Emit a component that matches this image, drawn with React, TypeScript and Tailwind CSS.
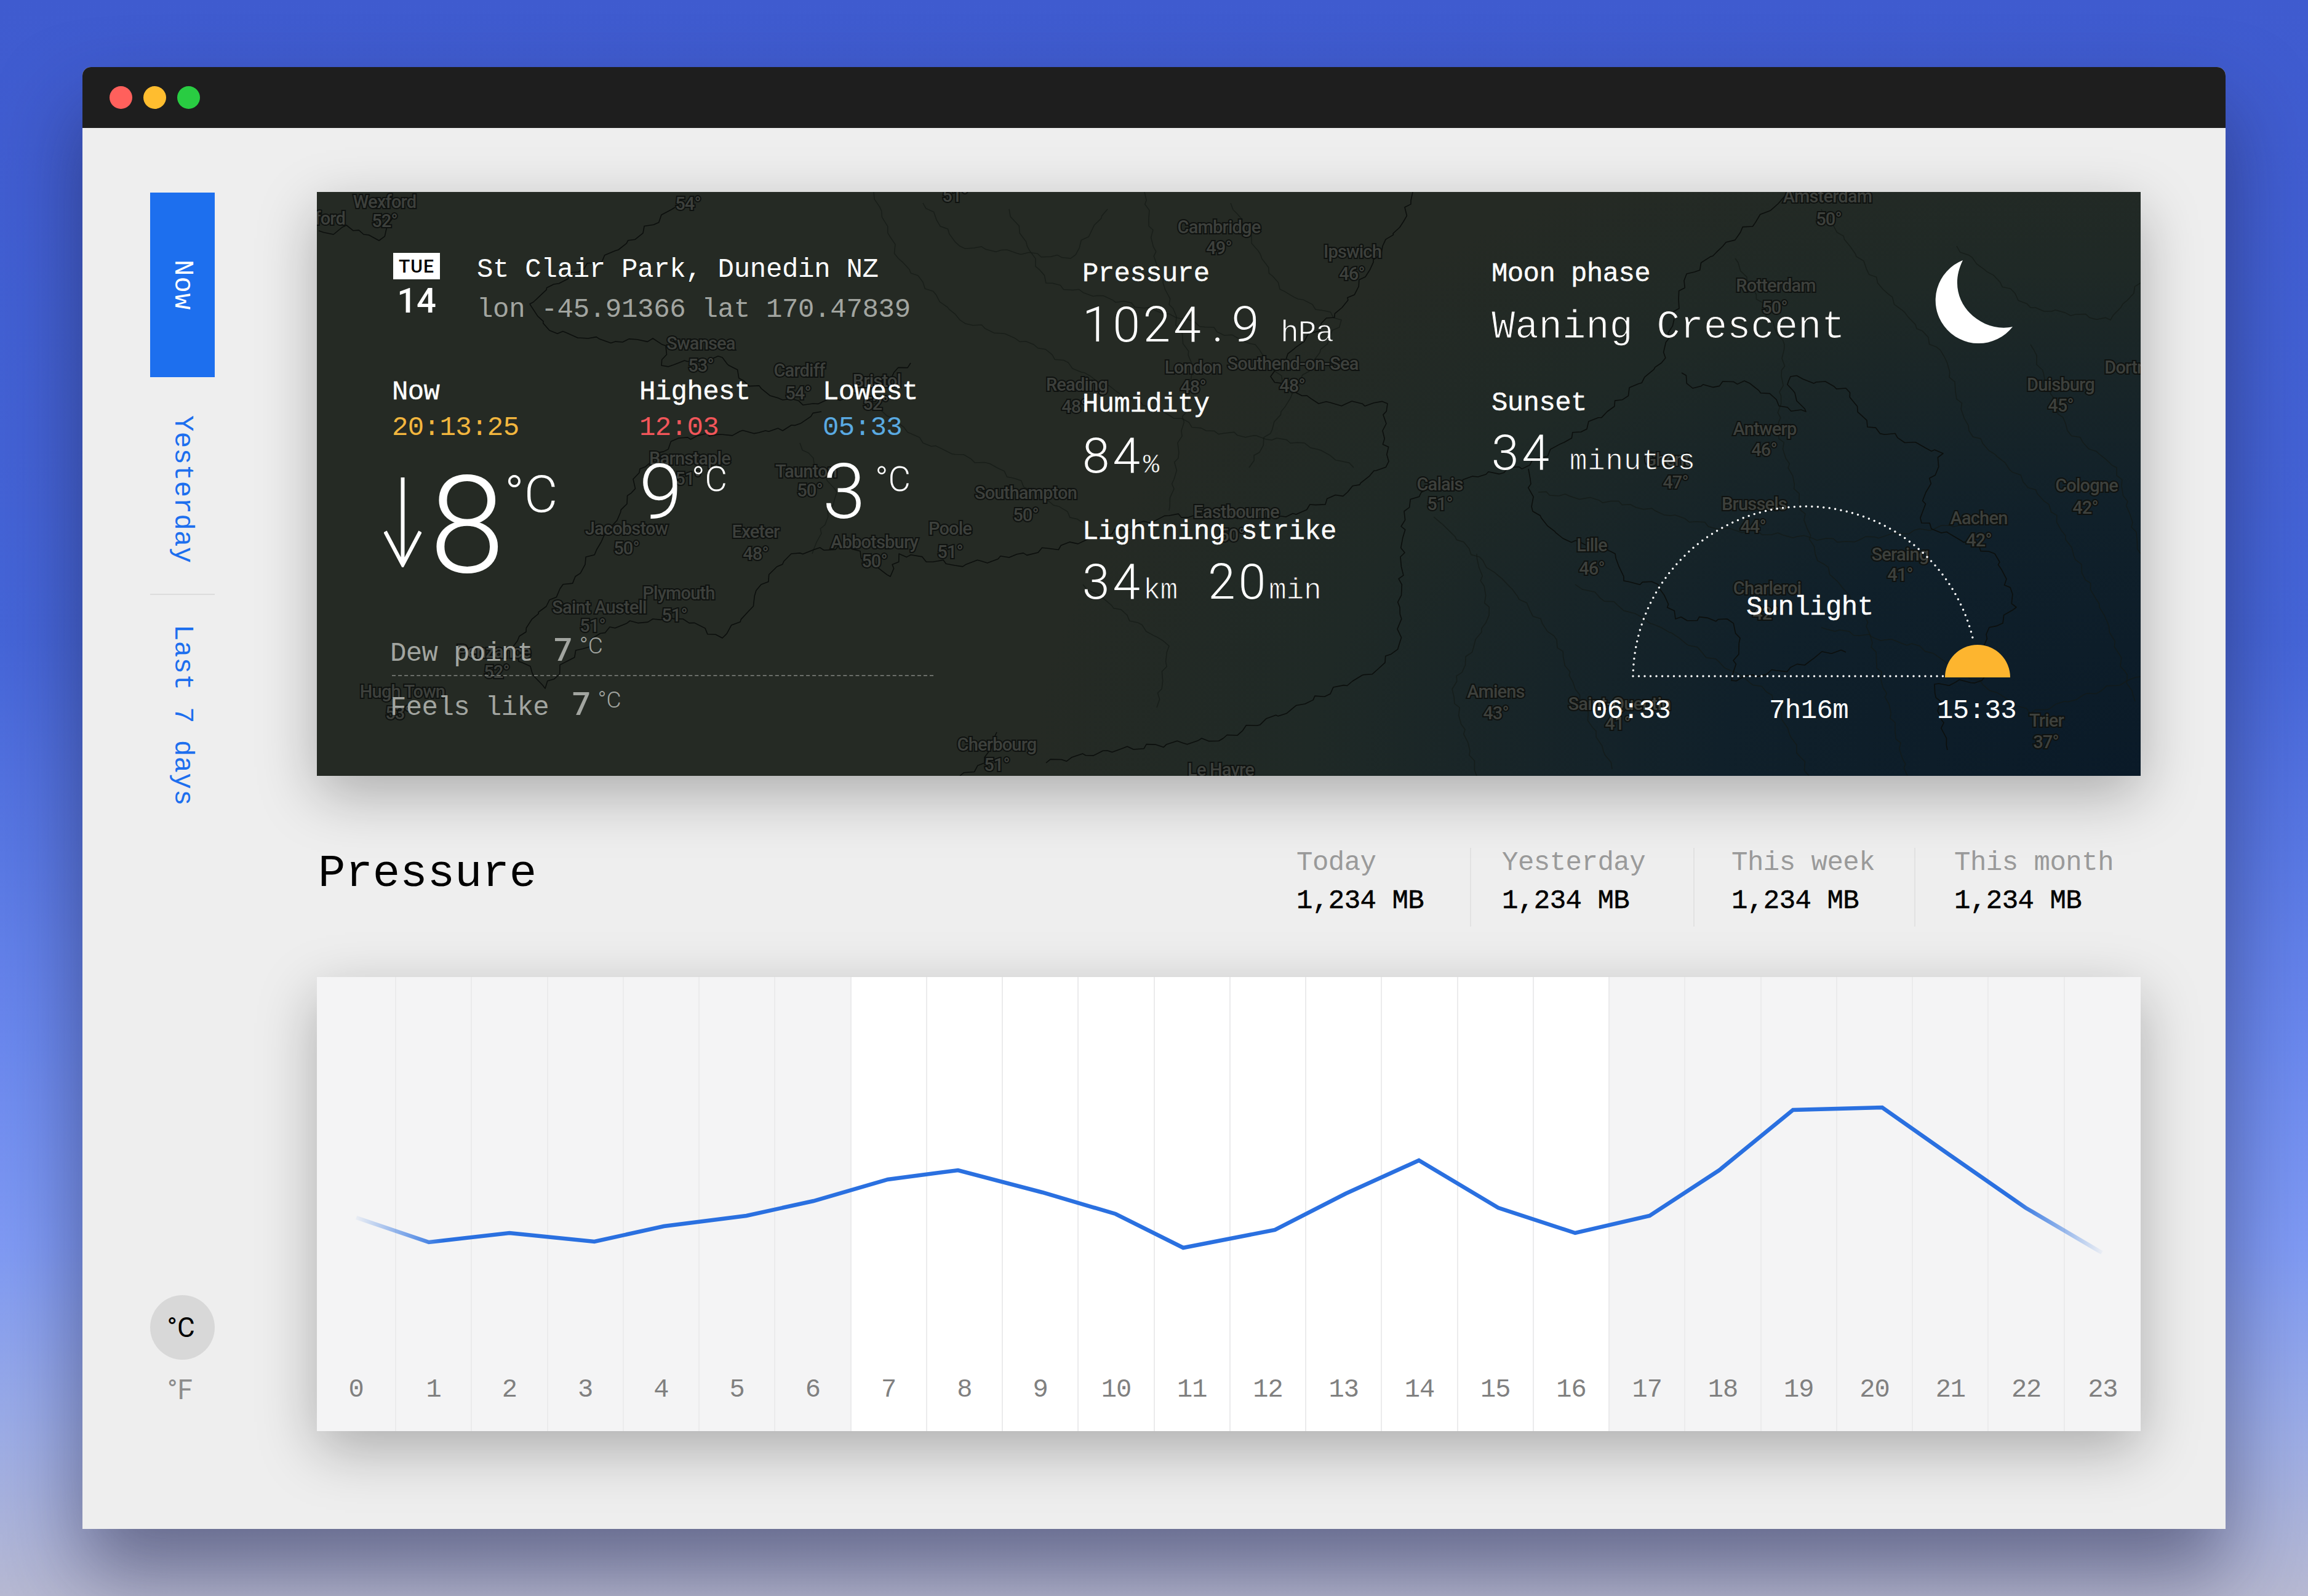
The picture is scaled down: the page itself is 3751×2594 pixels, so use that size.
const hours = Array.from({ length: 24 }, (_, i) => i);

const stats = [
  { label: "Today", cls: "w-[282px] pl-0" },
  { label: "Yesterday", cls: "w-[363px] pl-[50px] border-l-2 border-[#e2e2e2]" },
  { label: "This week", cls: "w-[359px] pl-[60px] border-l-2 border-[#e2e2e2]" },
  { label: "This month", cls: "w-[368px] pl-[63px] border-l-2 border-[#e2e2e2]" },
];

// label positions in page pixels, the map svg has a matching viewBox
const mapLabels: [string, number, number][] = [
  ["Wexford", 625, 328], ["52°", 625, 359], ["54°", 1118, 331], ["51°", 1552, 318],
  ["Swansea", 1139, 558], ["53°", 1139, 594], ["Cardiff", 1299, 602], ["54°", 1297, 639],
  ["Bristol", 1425, 619], ["52°", 1423, 656], ["Barnstaple", 1121, 745], ["51°", 1118, 778],
  ["Taunton", 1310, 766], ["50°", 1316, 797], ["Jacobstow", 1018, 859], ["50°", 1018, 891],
  ["Exeter", 1228, 864], ["48°", 1228, 900], ["Abbotsbury", 1421, 881], ["50°", 1421, 912],
  ["Poole", 1544, 859], ["51°", 1544, 897], ["Saint Austell", 974, 987], ["51°", 963, 1017],
  ["Plymouth", 1103, 964], ["51°", 1096, 1000], ["Penzance", 802, 1059], ["52°", 807, 1092],
  ["Hugh Town", 654, 1124], ["53°", 647, 1159], ["Cherbourg", 1620, 1210], ["51°", 1620, 1243],
  ["Cambridge", 1981, 369], ["49°", 1981, 403], ["Ipswich", 2198, 409], ["46°", 2197, 445],
  ["London", 1939, 597], ["48°", 1939, 629], ["Southend-on-Sea", 2101, 591], ["48°", 2100, 627],
  ["Reading", 1750, 625], ["48°", 1746, 661], ["Southampton", 1667, 801], ["50°", 1667, 837],
  ["Eastbourne", 2009, 832], ["50°", 2002, 870], ["Calais", 2340, 787], ["51°", 2340, 819],
  ["Le Havre", 1984, 1251], ["Amiens", 2431, 1124], ["43°", 2431, 1159], ["Amsterdam", 2970, 319],
  ["50°", 2972, 356], ["Rotterdam", 2886, 464], ["50°", 2884, 500], ["Antwerp", 2868, 697],
  ["46°", 2867, 731], ["Ghent", 2709, 747], ["47°", 2723, 784], ["Brussels", 2851, 819],
  ["44°", 2849, 856], ["Lille", 2587, 886], ["46°", 2587, 924], ["Charleroi", 2872, 956],
  ["42°", 2869, 997], ["Seraing", 3088, 901], ["41°", 3088, 934], ["Aachen", 3216, 842],
  ["42°", 3216, 878], ["Duisburg", 3349, 625], ["45°", 3349, 659], ["Cologne", 3391, 789],
  ["42°", 3389, 825], ["Dortmund", 3482, 597], ["Saint-Quentin", 2632, 1144], ["41°", 2629, 1176],
  ["Trier", 3326, 1171], ["37°", 3325, 1206], ["Waterford", 500, 355],
];

const coast: [number, number][][] = [
  [[518, 375], [542, 381], [563, 366], [591, 381], [616, 391], [628, 372], [640, 352]],
  [[1097, 337], [1005, 406], [949, 437], [900, 462], [861, 494], [893, 537], [956, 550], [1012, 556], [1061, 550], [1082, 562], [1075, 594], [1131, 587], [1174, 581], [1209, 619], [1272, 650], [1321, 656], [1400, 640], [1480, 590]],
  [[1335, 669], [1272, 700], [1244, 700], [1167, 706], [1103, 712], [1040, 762], [1019, 819], [977, 881], [935, 937], [893, 975], [844, 1034], [830, 1056], [865, 1094], [886, 1119], [921, 1075], [991, 1019], [1061, 1006], [1110, 1006], [1174, 1037], [1216, 994], [1237, 950], [1286, 900], [1377, 887], [1447, 937], [1461, 900], [1552, 919], [1640, 906], [1760, 880], [1900, 838], [2090, 840], [2190, 800], [2257, 750], [2247, 700], [2255, 656], [2143, 656], [2065, 612], [2093, 575], [2181, 500], [2219, 450], [2247, 400], [2281, 360], [2296, 312]],
  [[1700, 1240], [1800, 1220], [1988, 1200], [2121, 1144], [2240, 1087], [2275, 1044], [2275, 987], [2282, 831], [2310, 800], [2402, 775], [2486, 756], [2542, 719], [2612, 669], [2700, 590], [2737, 456], [2800, 400], [2890, 331], [2905, 312]],
  [[2484, 762], [2491, 831], [2540, 875], [2625, 900], [2639, 944], [2695, 950], [2723, 1006], [2807, 1006], [2828, 1037], [2814, 1106], [2933, 1081], [2961, 1059], [3000, 1060]],
  [[2733, 606], [2751, 631], [2835, 619], [2905, 662], [2935, 669], [2905, 625], [2910, 612], [3000, 631], [3035, 694], [3158, 737], [3130, 800], [3123, 850], [3242, 900], [3277, 987], [3228, 1031], [3221, 1106], [3144, 1112], [3165, 1219]],
  [[1620, 1190], [1600, 1240], [1560, 1261]],
];

const roads: [number, number][][] = [
  [[1420, 312], [1460, 420], [1560, 520], [1680, 560], [1820, 640], [1960, 700], [2120, 720], [2200, 760]],
  [[1640, 340], [1700, 460], [1900, 510], [2040, 560], [2100, 640], [2030, 760]],
  [[1860, 312], [1880, 430], [1940, 600], [1920, 700], [1900, 830]],
  [[1400, 640], [1500, 720], [1620, 760], [1760, 850]],
  [[1300, 720], [1360, 800], [1320, 900]],
  [[2330, 840], [2450, 950], [2530, 1040], [2560, 1120], [2620, 1250]],
  [[2560, 950], [2700, 1020], [2880, 1130], [2940, 1261]],
  [[2960, 340], [3060, 470], [3160, 580], [3200, 700], [3330, 820], [3420, 1000], [3470, 1140]],
  [[2820, 420], [2900, 560], [2890, 700], [2950, 900], [3030, 1000], [3100, 1261]],
  [[3180, 400], [3300, 500], [3430, 520], [3479, 460]],
  [[2500, 800], [2650, 820], [2800, 860], [3000, 880], [3200, 850]],
  [[2960, 1020], [3120, 1050], [3300, 1160], [3479, 1100]],
  [[1760, 950], [1900, 1050], [1880, 1150]],
  [[1500, 330], [1560, 400], [1740, 420], [1800, 340]],
  [[2000, 330], [2080, 470], [2180, 520], [2100, 640]],
  [[2400, 900], [2420, 1000], [2360, 1120], [2400, 1261]],
  [[3300, 560], [3360, 700], [3440, 760], [3479, 900]],
];

// breaks a hand traced line into small uneven steps so it reads as a coastline
function rough(points: [number, number][], amount: number) {
  let d = "";
  points.forEach(([x, y], i) => {
    if (i === 0) {
      d += `M${x} ${y}`;
      return;
    }
    const [px, py] = points[i - 1];
    const steps = Math.max(2, Math.round(Math.hypot(x - px, y - py) / 11));
    for (let s = 1; s <= steps; s++) {
      const t = s / steps;
      const edge = s === steps ? 0 : 1;
      const nx = Math.sin(x * 0.13 + s * 2.3 + i) * amount * edge;
      const ny = Math.cos(y * 0.17 + s * 1.7 + i) * amount * edge;
      d += ` L${(px + (x - px) * t + nx).toFixed(1)} ${(py + (y - py) * t + ny).toFixed(1)}`;
    }
  });
  return d;
}

const linePoints =
  "64,391 182,431 313,416 451,430 564,405 698,388 807,364 928,329 1042,314 1179,350 1298,385 1408,440 1557,411 1672,352 1791,298 1920,375 2045,416 2166,388 2279,314 2399,216 2544,212 2652,288 2777,375 2901,448";

function MapLayer() {
  return (
    <svg className="absolute inset-0 h-full w-full" viewBox="515 312 2964 949">
      {roads.map((p, i) => (
        <path key={i} d={rough(p, 3)} fill="none" stroke="#141916" strokeWidth="1.5" strokeOpacity="0.7" />
      ))}
      {coast.map((p, i) => (
        <path key={i} d={rough(p, 4)} fill="none" stroke="#0c0f0d" strokeWidth="1.6" strokeLinejoin="round" />
      ))}
      {mapLabels.map(([text, x, y], i) => (
        <text
          key={i}
          x={x}
          y={y + 10}
          textAnchor="middle"
          fontFamily="Roboto, sans-serif"
          fontSize="29"
          fontWeight="500"
          fill="#3d403c"
          stroke="#0f1210"
          strokeWidth="4"
          paintOrder="stroke"
          letterSpacing="-0.8"
        >
          {text}
        </text>
      ))}
    </svg>
  );
}

function Moon() {
  return (
    <svg width="130" height="138" viewBox="3144 423 130 138" className="absolute left-[2626px] top-[111px]">
      <path d="M3193 423 A70 70 0 1 0 3274 531 C3224 543 3160 490 3193 423 Z" fill="#ffffff" />
    </svg>
  );
}

function Sun() {
  return (
    <svg width="720" height="300" viewBox="2620 810 720 300" className="absolute left-[2105px] top-[498px]">
      <path
        d="M2654 1099 L3160 1099 M2654 1099 A280 280 0 0 1 3207 1041"
        fill="none"
        stroke="#ffffff"
        strokeWidth="3.5"
        strokeLinecap="round"
        strokeDasharray="0 9.5"
      />
      <path d="M3161 1101 A53 53 0 0 1 3267 1101 Z" fill="#fdb52f" />
    </svg>
  );
}

function Label({ children }: { children: string }) {
  return <div className="leading-[58px] tracking-[-0.6px] [-webkit-text-stroke:0.4px_white]">{children}</div>;
}

function Digits({ children }: { children: string }) {
  return <span className="font-['Roboto',sans-serif] text-[80px] font-light tracking-[5px]">{children}</span>;
}

function BigStat({ label, time, timeCls, value }: { label: string; time: string; timeCls: string; value: string }) {
  return (
    <div>
      <Label>{label}</Label>
      <div className={`leading-[58px] tracking-[-0.6px] ${timeCls}`}>{time}</div>
      <div className="mt-[13px] flex font-['Roboto',sans-serif] font-light">
        <span className="text-[125px] leading-[125px]">{value}</span>
        <span className="ml-[16px] mt-[14px] text-[56px] leading-[56px]">°C</span>
      </div>
    </div>
  );
}

function SmallStat({ label, ml, unitMl }: { label: string; ml: string; unitMl: string }) {
  return (
    <div className="-ml-[3px] flex h-[58px] items-baseline leading-[58px] text-[#a2a5a0]">
      <span className="tracking-[-0.6px]">{label}</span>
      <span className={`${ml} font-['Roboto',sans-serif] text-[52px] font-medium leading-[58px]`}>7</span>
      <span className={`${unitMl} -translate-y-[12px] font-['Roboto',sans-serif] text-[37px] font-light leading-[58px]`}>°C</span>
    </div>
  );
}

export default function App() {
  return (
    <div className="h-[2594px] w-[3751px] overflow-hidden bg-[linear-gradient(180deg,#3f5bcf_0%,#4565d8_40%,#6a88ee_65%,#7f9af4_78%,#9dade6_90%,#b7b9d2_100%)] pl-[134px] pt-[109px]">
      <div className="flex h-[2376px] w-[3483px] flex-col overflow-hidden rounded-t-[14px] bg-[#eeeeee] shadow-[0_70px_130px_rgba(30,30,60,0.5)]">
        <div className="flex h-[99px] items-center gap-[18px] bg-[#1e1e1e] pb-[1px] pl-[44px]">
          <div className="h-[37px] w-[37px] rounded-full bg-[#ff605c]" />
          <div className="h-[37px] w-[37px] rounded-full bg-[#ffbd2f]" />
          <div className="h-[37px] w-[37px] rounded-full bg-[#29cc42]" />
        </div>

        <div className="flex min-h-0 flex-1 font-['Liberation_Mono',monospace]">
          <aside className="flex w-[381px] flex-col pl-[110px] pt-[105px]">
            <div className="flex h-[300px] w-[105px] items-center justify-center bg-[#1d6fee] text-[44px] tracking-[1px] text-white [writing-mode:vertical-rl]">
              Now
            </div>
            <div className="mt-[62px] flex h-[240px] w-[105px] items-center justify-center text-[44px] tracking-[0.3px] text-[#1d6fee] [writing-mode:vertical-rl]">
              Yesterday
            </div>
            <div className="mt-[50px] h-[2px] w-[105px] bg-[#dcdcdc]" />
            <div className="mt-[48px] flex h-[294px] w-[105px] items-center justify-center whitespace-nowrap text-[44px] tracking-[0.4px] text-[#1d6fee] [writing-mode:vertical-rl]">
              Last 7 days
            </div>
            <div className="mt-[796px] flex h-[105px] w-[105px] items-center justify-center rounded-full bg-[#d8d8d8] pr-[5px] font-['Roboto',sans-serif] text-[44px] text-black">
              °C
            </div>
            <div className="mt-[23px] w-[97px] text-center font-['Roboto',sans-serif] text-[44px] leading-[52px] text-[#8c8c8c]">°F</div>
          </aside>

          <main className="w-[2964px] pt-[104px]">
            <section className="relative h-[949px] overflow-hidden bg-[radial-gradient(ellipse_1800px_1100px_at_100%_100%,#0a1a28_0%,#10202a_38%,#1f2926_75%,#252a24_100%)] text-[44px] text-white shadow-[0_30px_90px_rgba(0,0,0,0.28)]">
              <MapLayer />
              <div className="relative flex h-full">
                <div className="w-[1244px] pl-[122px]">
                  <div className="flex pt-[94px]">
                    <div className="ml-[2px] mt-[5px] w-[76px]">
                      <div className="flex h-[43px] items-center justify-center bg-white font-['Roboto',sans-serif] text-[30px] font-medium tracking-[1px] text-black">
                        TUE
                      </div>
                      <div className="mt-[2px] text-center font-['Roboto',sans-serif] text-[56px] font-medium leading-[66px]">14</div>
                    </div>
                    <div className="ml-[60px]">
                      <div className="leading-[65px] tracking-[-0.3px]">St Clair Park, Dunedin NZ</div>
                      <div className="leading-[65px] tracking-[-0.3px] text-[#a2a5a0]">lon -45.91366 lat 170.47839</div>
                    </div>
                  </div>

                  <div className="mt-[72px] flex">
                    <div className="w-[402px]">
                      <Label>Now</Label>
                      <div className="leading-[58px] tracking-[-0.6px] text-[#f2b63e]">20:13:25</div>
                      <div className="-ml-[13px] mt-[21px] flex font-['Roboto',sans-serif] font-light">
                        <svg width="61" height="146" viewBox="0 0 61 146" className="mt-[31px]">
                          <path d="M30.5 0 V142 M2 88 L30.5 142 L59 88" fill="none" stroke="#ffffff" strokeWidth="6" />
                        </svg>
                        <span className="ml-[13px] text-[220px] leading-[220px]">8</span>
                        <span className="ml-0 mt-[17px] text-[84px] leading-[84px]">°C</span>
                      </div>
                    </div>
                    <div className="w-[298px]">
                      <BigStat label="Highest" time="12:03" timeCls="text-[#f2565a]" value="9" />
                    </div>
                    <BigStat label="Lowest" time="05:33" timeCls="text-[#5aaae2]" value="3" />
                  </div>

                  <div className="mt-[63px] w-[880px]">
                    <SmallStat label="Dew point" ml="ml-[34px]" unitMl="ml-[12px]" />
                    <div className="mb-[17px] mt-[11px] h-0 border-t-2 border-dashed border-[#6b6e69]" />
                    <SmallStat label="Feels like" ml="ml-[38px]" unitMl="ml-[12px]" />
                  </div>
                </div>

                <div className="w-[665px] pt-[104px]">
                  <Label>Pressure</Label>
                  <div className="mt-[4px] leading-[100px]">
                    <Digits>1024</Digits>
                    <span className="mx-[13px] font-['Roboto',sans-serif] text-[80px] font-light">.</span>
                    <Digits>9</Digits>
                    <span className="ml-[30px] text-[50px] tracking-[-1.5px] [-webkit-text-stroke:1px_#252a25]">hPa</span>
                  </div>
                  <div className="mt-[35px]">
                    <Label>Humidity</Label>
                  </div>
                  <div className="mt-[5px] leading-[100px]">
                    <Digits>84</Digits>
                    <span className="text-[44px] [-webkit-text-stroke:0.6px_#252a25]">%</span>
                  </div>
                  <div className="mt-[29px]">
                    <Label>Lightning strike</Label>
                  </div>
                  <div className="mt-[3px] leading-[100px]">
                    <Digits>34</Digits>
                    <span className="text-[48px] tracking-[-1px] [-webkit-text-stroke:1px_#252a25]">km</span>
                    <span className="ml-[50px]">
                      <Digits>20</Digits>
                    </span>
                    <span className="text-[48px] tracking-[-0.4px] [-webkit-text-stroke:1px_#252a25]">min</span>
                  </div>
                </div>

                <div className="pt-[104px]">
                  <Label>Moon phase</Label>
                  <div className="mt-[8px] text-[64px] leading-[100px] tracking-[-0.1px] [-webkit-text-stroke:1.2px_#252a25]">Waning Crescent</div>
                  <div className="mt-[44px]">
                    <Label>Sunset</Label>
                  </div>
                  <div className="mt-[2px] leading-[100px]">
                    <Digits>34</Digits>
                    <span className="ml-[28px] text-[48px] tracking-[0.5px] [-webkit-text-stroke:1px_#222824]">minutes</span>
                  </div>
                </div>
              </div>
              <Moon />
              <Sun />
              <div className="absolute left-[2323px] top-[646px] leading-[58px] tracking-[-0.6px] [-webkit-text-stroke:0.4px_white]">Sunlight</div>
              <div className="absolute left-[2071px] top-[814px] flex leading-[58px] tracking-[-0.6px]">
                <span>06:33</span>
                <span className="ml-[160px]">7h16m</span>
                <span className="ml-[144px]">15:33</span>
              </div>
            </section>

            <div className="flex h-[327px] items-start justify-between">
              <h1 className="ml-[2px] mt-[114px] text-[74px] leading-[90px] tracking-[0px] text-black">Pressure</h1>
              <div className="mt-[117px] flex">
                {stats.map((s) => (
                  <div key={s.label} className={`h-[128px] ${s.cls}`}>
                    <div className="-mt-[7px] text-[44px] leading-[62px] tracking-[-0.5px] text-[#9a9a9a]">{s.label}</div>
                    <div className="text-[44px] leading-[62px] tracking-[-0.5px] text-black [-webkit-text-stroke:0.5px_black]">1,234 MB</div>
                  </div>
                ))}
              </div>
            </div>

            <section className="relative h-[738px] bg-[#f4f4f5] shadow-[0_30px_90px_rgba(0,0,0,0.28)]">
              <div className="grid h-full grid-cols-[129px_repeat(23,1fr)]">
                {hours.map((h) => (
                  <div
                    key={h}
                    className={`flex items-end justify-center border-r-2 border-[#ebebec] pb-[44px] text-[42px] leading-[46px] tracking-[-1px] text-[#808080] last:border-r-0 ${
                      h >= 7 && h <= 16 ? "bg-white" : ""
                    }`}
                  >
                    {h}
                  </div>
                ))}
              </div>
              <svg className="absolute inset-0 h-full w-full" viewBox="0 0 2964 738">
                <defs>
                  <linearGradient id="lineFade" gradientUnits="userSpaceOnUse" x1="64" y1="0" x2="2901" y2="0">
                    <stop offset="0" stopColor="#2a70e0" stopOpacity="0.05" />
                    <stop offset="0.05" stopColor="#2a70e0" />
                    <stop offset="0.95" stopColor="#2a70e0" />
                    <stop offset="1" stopColor="#2a70e0" stopOpacity="0.05" />
                  </linearGradient>
                </defs>
                <polyline points={linePoints} fill="none" stroke="url(#lineFade)" strokeWidth="6.5" strokeLinejoin="miter" />
              </svg>
            </section>
          </main>
        </div>
      </div>
    </div>
  );
}
